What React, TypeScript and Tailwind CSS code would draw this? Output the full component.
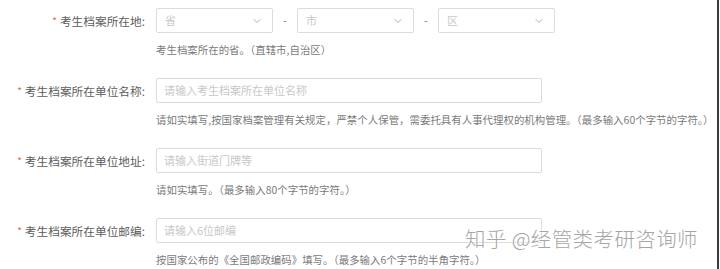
import React from 'react';
import { ChevronDown } from 'lucide-react';

const font = { fontFamily: '"Noto Sans CJK SC", "Noto Sans", sans-serif' };

function Label({ text }: { text: string }) {
  return (
    <div className="w-[145px] shrink-0 h-[25px] flex items-center justify-end text-[11.7px] text-[#5c5c5c]">
      <span className="text-[#e8604c] mr-[3px] text-[10px]">*</span>
      {text}:
    </div>
  );
}

function Select({ placeholder }: { placeholder: string }) {
  return (
    <div className="w-[117px] h-[25px] border border-[#dcdcdc] rounded-[2px] bg-white flex items-center justify-between pl-[8px] pr-[9px]">
      <span className="text-[11px] text-[#c8c8c8]">{placeholder}</span>
      <ChevronDown className="w-[12px] h-[12px] text-[#9a9a9a]" strokeWidth={1.6} />
    </div>
  );
}

function Help({ children }: { children: React.ReactNode }) {
  return (
    <div className="mt-[9px] leading-4 text-[10.4px] tracking-[0.05px] text-[#7a7a7a] whitespace-nowrap">
      {children}
    </div>
  );
}

const rows = [
  {
    label: '考生档案所在单位名称',
    placeholder: '请输入考生档案所在单位名称',
    help: '请如实填写,按国家档案管理有关规定，严禁个人保管，需委托具有人事代理权的机构管理。（最多输入60个字节的字符。）',
  },
  {
    label: '考生档案所在单位地址',
    placeholder: '请输入街道门牌等',
    help: '请如实填写。（最多输入80个字节的字符。）',
  },
  {
    label: '考生档案所在单位邮编',
    placeholder: '请输入6位邮编',
    help: '按国家公布的《全国邮政编码》填写。（最多输入6个字节的半角字符。）',
  },
];

export default function App() {
  return (
    <div className="w-[720px] h-[269px] bg-white relative overflow-hidden" style={font}>
      <div className="w-[719px] h-full border-r-2 border-[#3a3a3a] pt-[8px]">
        {/* location selects */}
        <div className="flex mb-[20px]">
          <Label text="考生档案所在地" />
          <div className="ml-[11px]">
            <div className="flex items-center">
              <Select placeholder="省" />
              <span className="w-[24px] text-center text-[11px] text-[#888]">-</span>
              <Select placeholder="市" />
              <span className="w-[24px] text-center text-[11px] text-[#888]">-</span>
              <Select placeholder="区" />
            </div>
            <Help>考生档案所在的省。（直辖市,自治区）</Help>
          </div>
        </div>

        {rows.map(r => (
          <div key={r.label} className="flex mb-[20px]">
            <Label text={r.label} />
            <div className="ml-[11px]">
              <div className="w-[386px] h-[25px] border border-[#dcdcdc] rounded-[2px] bg-white flex items-center pl-[7px] text-[11px] text-[#c8c8c8]">
                {r.placeholder}
              </div>
              <Help>{r.help}</Help>
            </div>
          </div>
        ))}
      </div>

      {/* watermark */}
      <div
        className="absolute left-[465px] top-[228px] text-[20.5px] font-light leading-none text-[#a6a6a6] whitespace-nowrap tracking-[0.4px]"
        style={{ textShadow: '0 0 2px #fff, 0 0 2px #fff' }}
      >
        知乎 @经管类考研咨询师
      </div>
    </div>
  );
}
